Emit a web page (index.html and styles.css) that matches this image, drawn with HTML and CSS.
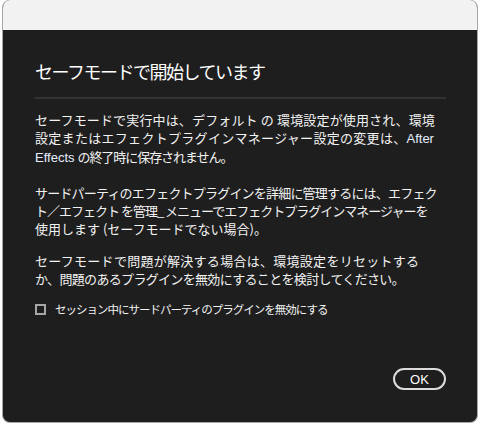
FILE: index.html
```html
<!DOCTYPE html>
<html lang="ja">
<head>
<meta charset="utf-8">
<link rel="stylesheet" href="styles.css">
</head>
<body>
<div class="window">
  <div class="titlebar"></div>
  <div class="content">
    <h1 class="title">セーフモードで開始しています</h1>
    <div class="sep"></div>
    <p class="para p1">
      <span class="line wide">セーフモードで実行中は、デフォルト の 環境設定が使用され、環境</span>
      <span class="line wide1">設定またはエフェクトプラグインマネージャー設定の変更は、<span class="app">After</span></span>
      <span class="line"><span class="app">Effects</span> <span class="tight-jp">の終了時に保存されません。</span></span>
    </p>
    <p class="para p2">
      <span class="line tight8">サードパーティのエフェクトプラグインを詳細に管理するには、エフェク</span>
      <span class="line tight10">ト／エフェクト を管理_ メニューでエフェクトプラグインマネージャーを</span>
      <span class="line">使用します (セーフモードでない場合)。</span>
    </p>
    <p class="para p3">
      <span class="line wide3">セーフモードで問題が解決する場合は、環境設定をリセットする</span>
      <span class="line tight3">か、問題のあるプラグインを無効にすることを検討してください。</span>
    </p>
    <label class="check">
      <span class="box"></span>
      <span class="check-label">セッション中にサードパーティのプラグインを無効にする</span>
    </label>
    <div class="actions">
      <button class="ok">OK</button>
    </div>
  </div>
</div>
</body>
</html>
```
FILE: styles.css
```css
html, body {
  margin: 0;
  padding: 0;
  background: #ffffff;
}
body {
  padding: 0 2px 3px 2px;
  font-family: "Noto Sans CJK JP", "Noto Sans", sans-serif;
}
.window {
  height: 423px;
  box-sizing: border-box;
  border: 1px solid #a8a8a8;
  border-top: none;
  border-radius: 8px;
  overflow: hidden;
  display: flex;
  flex-direction: column;
  background: #1e1e1e;
}
.titlebar {
  height: 30px;
  background: #f2f2f2;
  flex: none;
}
.content {
  flex: 1;
  padding: 0 31px 0 32px;
  display: flex;
  flex-direction: column;
  color: #f2f2f2;
}
.title {
  margin: 29px 0 0 0;
  font-size: 18px;
  font-weight: normal;
  line-height: 24px;
  letter-spacing: -1.5px;
  color: #ffffff;
}
.sep {
  height: 2px;
  background: #333333;
  margin-top: 14px;
}
.para {
  margin: 0;
  font-size: 13px;
  line-height: 18px;
}
.p1 { margin-top: 12px; }
.p2 { margin-top: 17px; }
.p3 { margin-top: 14px; }
.line {
  display: block;
  white-space: nowrap;
}
.wide { letter-spacing: 0.15px; }
.wide1 { letter-spacing: 0.3px; }
.tight-jp { letter-spacing: -1.05px; }
.tight8 { letter-spacing: -0.8px; }
.tight10 { letter-spacing: -1px; }
.wide3 { letter-spacing: 0.28px; }
.tight3 { letter-spacing: -0.67px; }
.app {
  font-family: "Liberation Sans", "Noto Sans", sans-serif;
  color: #e6efff;
  letter-spacing: 0;
}
.check {
  display: flex;
  align-items: center;
  margin-top: 13px;
  gap: 9px;
}
.box {
  width: 7px;
  height: 7px;
  border: 2px solid #a6a6a6;
  background: #1e1e1e;
  flex: none;
}
.check-label {
  font-size: 11.5px;
  letter-spacing: -1px;
  line-height: 16px;
}
.actions {
  margin-top: auto;
  margin-bottom: 32px;
  display: flex;
  justify-content: flex-end;
}
.ok {
  width: 53px;
  height: 22px;
  box-sizing: border-box;
  border: 2px solid #dcdcdc;
  border-radius: 11px;
  background: #1e1e1e;
  color: #ffffff;
  font-family: "Liberation Sans", "Noto Sans", sans-serif;
  font-size: 13px;
  padding: 0;
}
```
